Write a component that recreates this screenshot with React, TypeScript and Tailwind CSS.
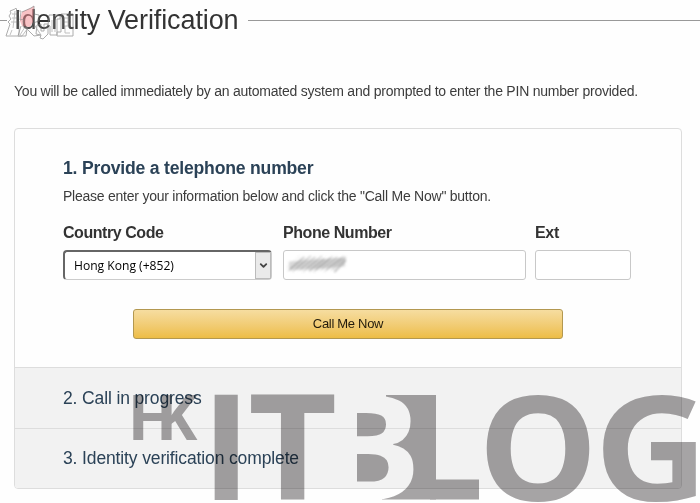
import React, { useState } from "react"
import { ChevronDown } from "lucide-react"

const steps = ["2. Call in progress", "3. Identity verification complete"]

const ScribbledNumber = () => (
  <svg width="62" height="24" viewBox="0 0 62 24" className="block shrink-0">
    <defs>
      <filter id="smudge">
        <feGaussianBlur stdDeviation="0.8" />
      </filter>
    </defs>
    <g stroke="#888" fill="none" filter="url(#smudge)">
      <path d="M3 13L59 9" stroke="#aaa" strokeWidth="9" opacity="0.4" />
      {Array.from({ length: 24 }, (_, i) => (
        <path
          key={i}
          d={`M${i * 2.1} ${15 + ((i * 3) % 5)}L${Math.min(60, 14 + i * 2.2)} ${3 + ((i * 3) % 5)}`}
          strokeWidth={0.8 + (i % 3) * 0.5}
          opacity={0.22 + ((i * 5) % 4) * 0.1}
        />
      ))}
    </g>
  </svg>
)

const SiteBadge = () => (
  <svg
    className="absolute left-0 top-0 pointer-events-none"
    width="80"
    height="44"
    viewBox="0 0 80 44"
  >
    <path d="M22 12l9-4 3-2-1 16-3 5-8-1-2-5z" fill="#f0666f" opacity="0.45" />
    <g stroke="#777" strokeWidth="1" fill="#fff" fillOpacity="0.2" opacity="0.6">
      <path d="M10 11l5-2 1-1 1 3h4l-1 9 4-1-1 8 5 1-6 8H6l4-12-2-2 3-3-2-3 2-3z" />
      <path d="M22 12l9-4 3-2v8l5 1v6l-6 2 8 12-7 1-7-7-1 7h-8l3-10" />
      <path d="M37 25l4-1v7h3v-7h4v10l-5 5-3-1 1-3-5-1z" />
      <path d="M49 15h11v4h-3v16h-7v-9l-2-1z" />
      <path d="M61 14h12v22H57v-4h4z" />
    </g>
    <g stroke="#666" strokeWidth="1" fill="none" opacity="0.4">
      <path d="M12 14h7M12 18h7M11 22h9M15 11l-2 17M19 23v12M12 30l-2 5M25 27l-5 8" />
      <path d="M63 18h8M63 22h8M63 26h8M65 26v7h5M68 15v11M52 20v12M55 19v13" />
    </g>
  </svg>
)

const Watermark = () => (
  <svg
    className="absolute left-0 top-0 pointer-events-none mix-blend-multiply"
    width="700"
    height="503"
    viewBox="0 0 700 503"
    fontFamily="'Open Sans', 'Noto Sans', sans-serif"
    fontWeight="700"
  >
    <defs>
      <mask id="blog-cut" maskUnits="userSpaceOnUse" x="340" y="380" width="150" height="123">
        <rect x="340" y="380" width="150" height="123" fill="#000" />
        <rect x="357" y="395" width="79" height="104.5" fill="#fff" />
        <rect x="430" y="479.5" width="49" height="20" fill="#fff" />
        <text transform="translate(315.5 499.5) scale(1.08 1)" fontSize="146.4" fill="#000">
          B
        </text>
        <rect x="350" y="390" width="36" height="20" fill="#000" />
        <rect x="350" y="484" width="32" height="18" fill="#000" />
      </mask>
    </defs>
    <g fill="#a7a5a6">
      <text transform="translate(127.4 439.5) scale(1.05 1)" fontSize="62">H</text>
      <text transform="translate(156.3 439.5)" fontSize="62">K</text>
      <text transform="translate(201 499.5) scale(1.04 1)" fontSize="146.4">I</text>
      <text transform="translate(248 499.5) scale(1.053 1)" fontSize="146.4">T</text>
      <rect x="340" y="380" width="150" height="123" mask="url(#blog-cut)" />
      <text transform="translate(478 501) scale(1.04 1)" fontSize="145">O</text>
      <text transform="translate(594 501) scale(1.09 1)" fontSize="145">G</text>
    </g>
  </svg>
)

const App = () => {
  const [phone, setPhone] = useState("")
  const [ext, setExt] = useState("")

  return (
    <main className="relative w-[700px] h-[503px] overflow-hidden bg-[#fefefe] text-[#333] font-['Liberation_Sans',Arial,sans-serif]">
      <header className="flex items-center h-10">
        <span className="w-[7px] h-px bg-[#999]" />
        <h1 className="ml-[7px] text-[27px] tracking-[-0.1px] leading-10 whitespace-nowrap">
          Identity Verification
        </h1>
        <span className="ml-[9px] grow h-px bg-[#999]" />
      </header>
      <p className="mt-[41px] ml-3.5 text-sm tracking-[-0.23px] leading-5 whitespace-nowrap text-[#3c3c3c]">
        You will be called immediately by an automated system and prompted to enter the PIN number provided.
      </p>

      <section className="mt-[27px] ml-3.5 w-[668px] h-[361px] rounded border border-[#ddd] overflow-hidden">
        <div className="h-[238px] px-12 pt-[27px]">
          <h2 className="text-[17.6px] tracking-[-0.2px] leading-6 font-bold text-[#2b4257]">
            1. Provide a telephone number
          </h2>
          <p className="mt-1.5 text-sm tracking-[-0.24px] leading-5 text-[#3c3c3c]">
            Please enter your information below and click the "Call Me Now" button.
          </p>
          <div className="mt-[15px] flex">
            <div className="w-[220px]">
              <h3 className="text-[16px] tracking-[-0.44px] leading-6 font-bold">Country Code</h3>
              <button className="mt-[5px] w-[209px] h-[30px] flex items-stretch border-t-2 border-l-2 border-r border-b border-t-[#666] border-l-[#666] border-r-[#ccc] border-b-[#ccc] rounded-sm bg-white">
                <span className="grow pl-[9px] pt-[5px] text-left text-[12.1px] text-black font-['Open_Sans',sans-serif]">
                  Hong Kong (+852)
                </span>
                <span className="w-4 flex items-center justify-center border border-[#bbb] bg-[#eaeaea]">
                  <ChevronDown size={11} strokeWidth={4} className="shrink-0 text-[#444]" />
                </span>
              </button>
            </div>
            <div className="w-[252px]">
              <h3 className="text-[16px] tracking-[-0.44px] leading-6 font-bold">Phone Number</h3>
              <div className="mt-[5px] w-[243px] h-[30px] flex items-center pl-0.5 border border-[#c8c8c8] rounded-[3px] bg-white">
                <ScribbledNumber />
                <input
                  value={phone}
                  onChange={(e) => setPhone(e.target.value)}
                  className="grow min-w-0 outline-none"
                />
              </div>
            </div>
            <div>
              <h3 className="text-[16px] tracking-[-0.3px] leading-6 font-bold">Ext</h3>
              <input
                value={ext}
                onChange={(e) => setExt(e.target.value)}
                className="mt-[5px] block w-24 h-[30px] px-2 border border-[#c8c8c8] rounded-[3px] bg-white outline-none"
              />
            </div>
          </div>
          <button className="mt-[29px] ml-[70px] w-[430px] h-[30px] rounded-[3px] border border-[#b39850] bg-linear-to-b from-[#f6dda0] to-[#edbd45] text-[13px] tracking-[-0.3px] text-[#221b0c]">
            Call Me Now
          </button>
        </div>
        {steps.map((step) => (
          <div
            key={step}
            className="h-[60.5px] px-12 flex items-center border-t border-[#ddd] bg-[#f2f2f2]"
          >
            <h2 className="text-[17.5px] tracking-[-0.13px] text-[#2b4257]">{step}</h2>
          </div>
        ))}
      </section>
      <Watermark />
      <SiteBadge />
    </main>
  )
}

export default App
